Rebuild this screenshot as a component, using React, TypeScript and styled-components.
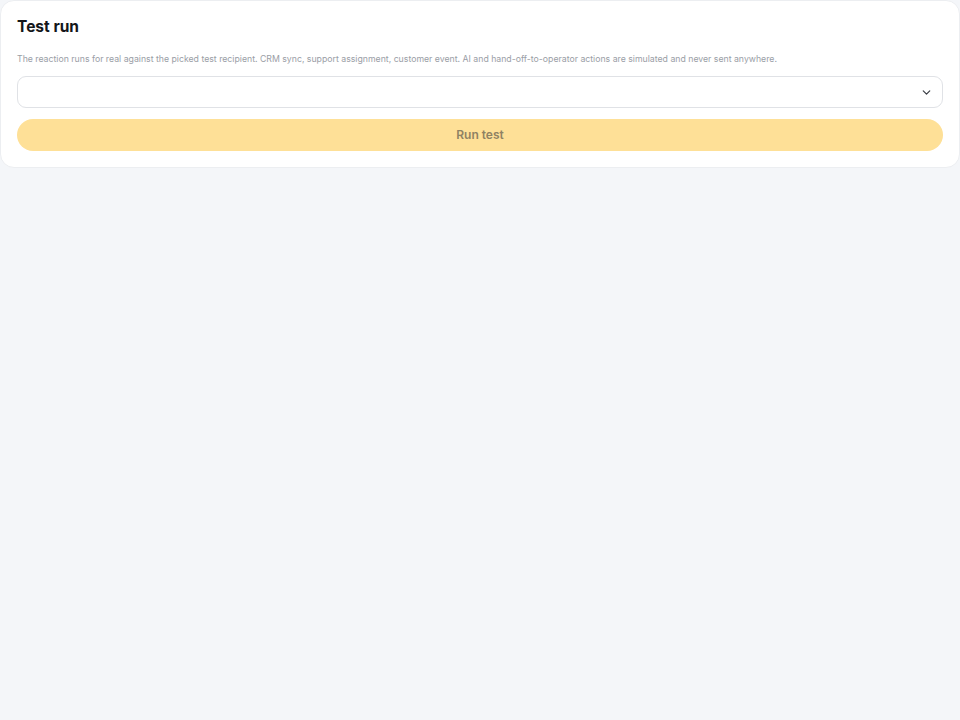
import React from 'react'
import styled, { createGlobalStyle } from 'styled-components'
import { ChevronDown } from 'lucide-react'

const GlobalStyle = createGlobalStyle`
  html, body {
    margin: 0;
    padding: 0;
    height: 100%;
    background: #f4f6f9;
  }
  * {
    box-sizing: border-box;
  }
`

const Page = styled.div`
  width: 100%;
  min-height: 720px;
  background: #f4f6f9;
  font-family: Inter, 'Noto Sans', sans-serif;
`

const Card = styled.section`
  display: flex;
  flex-flow: column nowrap;
  height: 168px;
  padding: 16px 16px 16px;
  background: #ffffff;
  border: 1px solid #eceef1;
  border-radius: 14px;
`

const Title = styled.h2`
  margin: 0;
  font-size: 15.5px;
  line-height: 20px;
  font-weight: 700;
  color: #14161a;
`

const Description = styled.p`
  margin: 15px 0 0;
  font-size: 8.72px;
  line-height: 14px;
  color: #9a9ea6;
`

const SelectBox = styled.div`
  display: flex;
  flex-flow: row nowrap;
  justify-content: flex-end;
  align-items: center;
  height: 32px;
  margin-top: 10px;
  padding: 0 9px;
  background: #ffffff;
  border: 1px solid #e0e2e6;
  border-radius: 9px;
  color: #3a3d44;
`

const RunButton = styled.button`
  display: block;
  width: 100%;
  height: 32px;
  margin-top: 11px;
  padding: 0 0 2px;
  border: none;
  border-radius: 16px;
  background: #fee097;
  font-family: inherit;
  font-size: 12px;
  font-weight: 600;
  color: #8f8263;
`

const App: React.FunctionComponent = () => {
  return (
    <Page>
      <GlobalStyle />
      <Card>
        <Title>Test run</Title>
        <Description>
          The reaction runs for real against the picked test recipient. CRM sync, support assignment, customer event. AI
          and hand-off-to-operator actions are simulated and never sent anywhere.
        </Description>
        <SelectBox>
          <ChevronDown size={13} strokeWidth={2.25} />
        </SelectBox>
        <RunButton disabled>Run test</RunButton>
      </Card>
    </Page>
  )
}

export default App
